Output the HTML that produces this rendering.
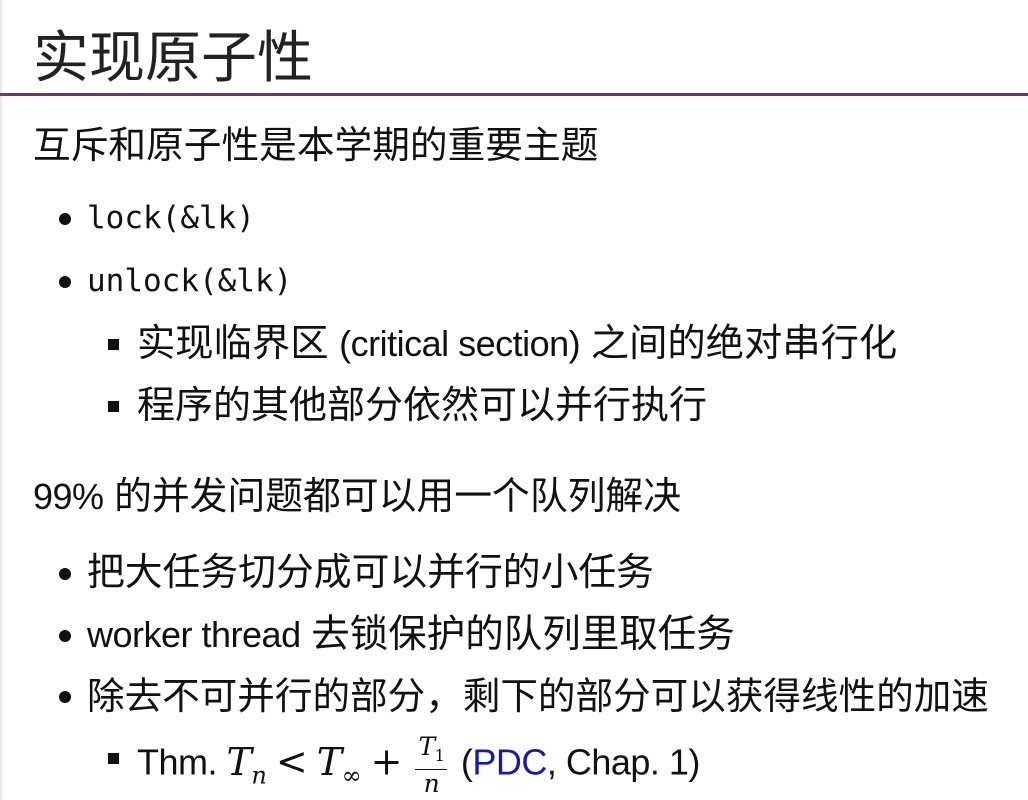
<!DOCTYPE html>
<html><head><meta charset="utf-8"><style>
html,body{margin:0;padding:0;background:#fff;}
body{width:1028px;height:800px;position:relative;overflow:hidden;font-family:"Liberation Sans","Noto Sans CJK SC",sans-serif;color:#111;}
.l{position:absolute;white-space:nowrap;height:50px;line-height:50px;font-size:38px;}
.m{font-family:"DejaVu Sans Mono","Liberation Mono",monospace;font-size:31px;}
.lat{font-size:36px;letter-spacing:-0.5px}
.dot{position:absolute;width:12px;height:12px;border-radius:50%;background:#111;}
.sq{position:absolute;width:11px;height:11px;background:#111;}
.math{font-family:"DejaVu Serif","Liberation Serif",serif;font-style:italic;}
</style></head><body>
<div style="position:absolute;left:0;top:0;width:2px;height:800px;background:#e8e8e8"></div>
<div class="l" style="left:33px;top:26px;height:64px;line-height:64px;font-size:56px;color:#222">实现原子性</div>
<div style="position:absolute;left:0;top:93px;width:1028px;height:3px;background:#7f2a80"></div>
<div class="l" style="left:33px;top:120px;font-size:37.7px">互斥和原子性是本学期的重要主题</div>
<div class="dot" style="left:59px;top:213px"></div>
<div class="l m" style="left:87px;top:193px">lock(&amp;lk)</div>
<div class="dot" style="left:59px;top:276px"></div>
<div class="l m" style="left:87px;top:256px">unlock(&amp;lk)</div>
<div class="sq" style="left:108px;top:339px"></div>
<div class="l" style="left:137px;top:319px;font-size:38.3px">实现临界区 <span class="lat">(critical section)</span> 之间的绝对串行化</div>
<div class="sq" style="left:108px;top:401px"></div>
<div class="l" style="left:137px;top:381px;font-size:38px">程序的其他部分依然可以并行执行</div>
<div class="l" style="left:33px;top:472px;font-size:37.8px"><span class="lat">99%</span> 的并发问题都可以用一个队列解决</div>
<div class="dot" style="left:59px;top:568px"></div>
<div class="l" style="left:87px;top:548px;font-size:37.8px">把大任务切分成可以并行的小任务</div>
<div class="dot" style="left:59px;top:630px"></div>
<div class="l" style="left:87px;top:610px;font-size:38.5px"><span class="lat">worker thread</span> 去锁保护的队列里取任务</div>
<div class="dot" style="left:59px;top:691px"></div>
<div class="l" style="left:87px;top:671px;font-size:37.6px">除去不可并行的部分，剩下的部分可以获得线性的加速</div>
<div class="sq" style="left:108px;top:753px"></div>
<div class="l" style="left:137px;top:733px;font-size:36px;letter-spacing:-0.5px">Thm. <span class="math" style="font-size:38px">T<sub style="font-size:24px">n</sub></span> <span style="font-family:'DejaVu Serif',serif;font-size:38px">&lt;</span> <span class="math" style="font-size:38px">T<sub style="font-size:24px;font-style:normal">∞</sub></span> <span style="font-family:'DejaVu Serif',serif;font-size:38px">+</span> <span style="display:inline-block;vertical-align:middle;text-align:center;line-height:27px;font-family:'DejaVu Serif',serif;font-style:italic;font-size:25px;margin:0 4px"><span style="display:block;border-bottom:1.5px solid #111;padding:0 3px">T<sub style="font-size:16px;font-style:normal">1</sub></span><span style="display:block">n</span></span> (<span style="color:#1a1a9a">PDC</span>, Chap. 1)</div>
</body></html>
